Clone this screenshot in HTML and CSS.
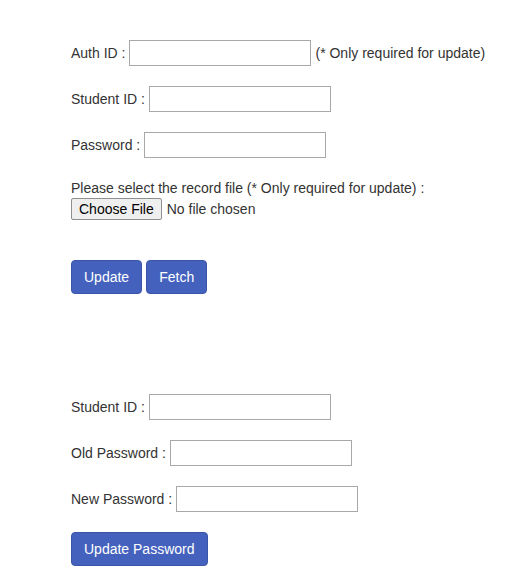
FILE: index.html
```html
<!DOCTYPE html>
<html>
<head>
<meta charset="utf-8">
<link rel="stylesheet" href="styles.css">
</head>
<body>
<div class="page">
  <form class="form form-top">
    <div class="row"><label>Auth ID :</label><input class="field" type="text"><span>(* Only required for update)</span></div>
    <div class="row"><label>Student ID :</label><input class="field" type="text"></div>
    <div class="row"><label>Password :</label><input class="field" type="password"></div>
    <div class="file-block">
      <div class="file-label">Please select the record file (* Only required for update) :</div>
      <input class="file" type="file">
    </div>
    <div class="actions actions-top">
      <button type="button" class="btn">Update</button>
      <button type="button" class="btn">Fetch</button>
    </div>
  </form>
  <form class="form form-bottom">
    <div class="row"><label>Student ID :</label><input class="field" type="text"></div>
    <div class="row"><label>Old Password :</label><input class="field" type="password"></div>
    <div class="row"><label>New Password :</label><input class="field" type="password"></div>
    <div class="actions">
      <button type="button" class="btn">Update Password</button>
    </div>
  </form>
</div>
</body>
</html>
```

FILE: styles.css
```css
html, body {
  margin: 0;
  padding: 0;
  background: #ffffff;
}
body {
  font-family: "Liberation Sans", Arial, sans-serif;
  font-size: 14px;
  line-height: 20px;
  color: #333333;
}
.page {
  padding: 40px 0 0 71px;
}
.form {
  display: flex;
  flex-direction: column;
  gap: 20px;
  margin: 0;
}
.form-bottom {
  margin-top: 100px;
}
.row {
  display: flex;
  align-items: center;
  gap: 4px;
  height: 26px;
}
.row label {
  white-space: nowrap;
}
.row span {
  white-space: nowrap;
}
.field {
  box-sizing: border-box;
  width: 182px;
  height: 26px;
  margin: 0;
  border: 1px solid #a8a8a8;
  border-radius: 0;
  padding: 2px 4px;
  font: inherit;
  background: #fff;
}
.file-label {
  height: 20px;
}
.file {
  display: block;
  margin: 0;
  font-family: "Liberation Sans", Arial, sans-serif;
  font-size: 14px;
  color: #333;
  height: 22px;
}
.file::file-selector-button {
  font: inherit;
  height: 22px;
  padding: 0 7px;
  margin-right: 5px;
  border: 1px solid #8f8f8f;
  border-radius: 2px;
  background: #efefef;
  color: #000;
}
.actions {
  display: flex;
  gap: 4px;
}
.actions-top {
  margin-top: 20px;
}
.btn {
  box-sizing: border-box;
  height: 34px;
  padding: 6px 12px;
  font: inherit;
  color: #ffffff;
  background: #4462bd;
  border: 1px solid #3a56a8;
  border-radius: 4px;
  cursor: pointer;
}
```
